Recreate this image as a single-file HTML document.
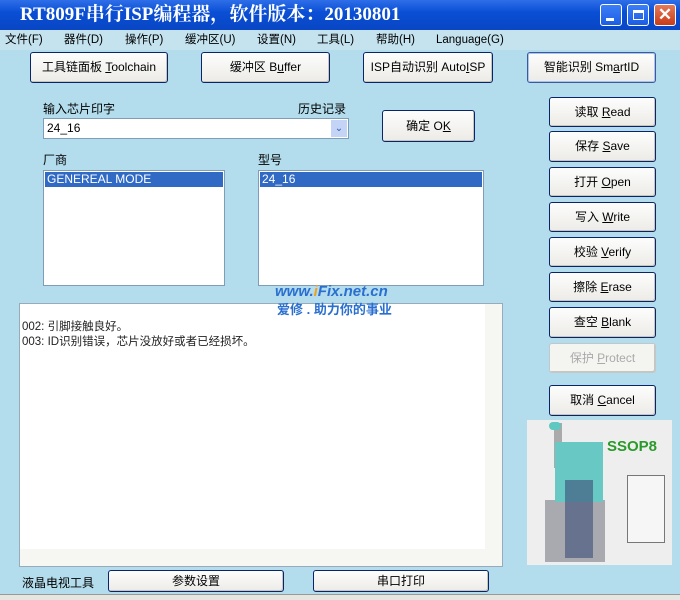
<!DOCTYPE html>
<html><head><meta charset="utf-8"><style>
*{box-sizing:border-box;margin:0;padding:0}
body{width:680px;height:600px;overflow:hidden;background:#b3dcec;font-family:"Liberation Sans","Noto Sans CJK SC",sans-serif;font-size:12px;color:#000;position:relative}
.a{position:absolute}
.title{left:0;top:0;width:680px;height:30px;background:linear-gradient(#2e6ee8,#0a4fd6 40%,#0846c4);color:#fff;font-family:"Liberation Serif","Noto Serif CJK SC",serif;font-size:19px;font-weight:bold;line-height:30px;padding-left:20px}
.menu{left:0;top:30px;width:680px;height:20px;background:#c4e3ef;font-size:11.5px;line-height:20px}
.menu span{position:absolute;top:0}
.btn{position:absolute;background:linear-gradient(#fdfdfd,#ecebe6);border:1px solid #0a246a;border-radius:3px;text-align:center;font-size:12px;box-shadow:inset -1px -1px 0 #c8c6bc}
.box{position:absolute;background:#fff;border:1px solid #7f9db9}
.sel{background:#316ac5;color:#fff;height:15px;line-height:15px;padding-left:2px;margin:1px}
.wb{position:absolute;top:4px;width:22px;height:22px;border:1px solid #fff;border-radius:3px;background:linear-gradient(#3c7ef6,#1c5ee4)}
</style></head><body>
<div class="a title">RT809F串行ISP编程器，软件版本：20130801</div>
<div class="wb" style="left:600px"><div style="position:absolute;left:5px;bottom:4px;width:8px;height:3px;background:#fff"></div></div>
<div class="wb" style="left:627px"><div style="position:absolute;left:5px;top:5px;width:11px;height:10px;border:1px solid #fff;border-top-width:3px"></div></div>
<div class="wb" style="left:654px;background:linear-gradient(#e47a5a,#c83c18);color:#fff;font-size:17px;line-height:20px;text-align:center;font-weight:bold">✕</div>
<div class="a menu"><span style="left:5px">文件(F)</span><span style="left:64px">器件(D)</span><span style="left:125px">操作(P)</span><span style="left:185px">缓冲区(U)</span><span style="left:257px">设置(N)</span><span style="left:317px">工具(L)</span><span style="left:376px">帮助(H)</span><span style="left:436px">Language(G)</span></div>

<div class="btn" style="left:30px;top:52px;width:138px;height:31px;line-height:29px">工具链面板 <u>T</u>oolchain</div>
<div class="btn" style="left:201px;top:52px;width:129px;height:31px;line-height:29px">缓冲区 B<u>u</u>ffer</div>
<div class="btn" style="left:363px;top:52px;width:130px;height:31px;line-height:29px">ISP自动识别 Auto<u>I</u>SP</div>
<div class="btn" style="left:527px;top:52px;width:129px;height:31px;line-height:29px;border-color:#3c5a9a;box-shadow:inset 0 0 0 1px #a8c4ee">智能识别 Sm<u>a</u>rtID</div>

<div class="a" style="left:43px;top:100px">输入芯片印字</div>
<div class="a" style="left:298px;top:100px">历史记录</div>
<div class="box" style="left:43px;top:118px;width:306px;height:21px;line-height:19px;padding-left:3px">24_16<div style="position:absolute;right:1px;top:1px;width:16px;height:17px;background:#c4d4f6;color:#3b5aa8;font-size:10px;text-align:center;line-height:17px">⌄</div></div>
<div class="btn" style="left:382px;top:110px;width:93px;height:32px;line-height:30px">确定 O<u>K</u></div>
<div class="a" style="left:43px;top:151px">厂商</div>
<div class="a" style="left:258px;top:151px">型号</div>
<div class="box" style="left:43px;top:170px;width:182px;height:116px"><div class="sel">GENEREAL MODE</div></div>
<div class="box" style="left:258px;top:170px;width:226px;height:116px"><div class="sel">24_16</div></div>

<div class="box" style="left:19px;top:303px;width:484px;height:264px;border-color:#9ab">
<div style="position:absolute;left:2px;top:16px;font-size:11.5px;line-height:15px;color:#222">002: 引脚接触良好。<br>003: ID识别错误，芯片没放好或者已经损坏。</div>
<div style="position:absolute;right:0;top:0;width:17px;height:245px;background:#f6f6f2"></div>
<div style="position:absolute;left:0;bottom:0;width:482px;height:17px;background:#f6f6f2"></div>
</div>
<div class="a" style="left:275px;top:283px;color:#2a6fd0;font-weight:bold;font-style:italic;font-size:15px">www.<span style="color:#f0a020">i</span>Fix.net.cn</div>
<div class="a" style="left:277px;top:299px;color:#2a6fd0;font-weight:bold;font-size:13px">爱修 . 助力你的事业</div>

<div class="btn" style="left:549px;top:97px;width:107px;height:30px;line-height:28px">读取 <u>R</u>ead</div>
<div class="btn" style="left:549px;top:131px;width:107px;height:31px;line-height:29px">保存 <u>S</u>ave</div>
<div class="btn" style="left:549px;top:167px;width:107px;height:30px;line-height:28px">打开 <u>O</u>pen</div>
<div class="btn" style="left:549px;top:202px;width:107px;height:30px;line-height:28px">写入 <u>W</u>rite</div>
<div class="btn" style="left:549px;top:237px;width:107px;height:30px;line-height:28px">校验 <u>V</u>erify</div>
<div class="btn" style="left:549px;top:272px;width:107px;height:30px;line-height:28px">擦除 <u>E</u>rase</div>
<div class="btn" style="left:549px;top:307px;width:107px;height:31px;line-height:29px">查空 <u>B</u>lank</div>
<div class="btn" style="left:549px;top:343px;width:107px;height:30px;line-height:28px;color:#aaa;border-color:#c0c8cc;background:#f4f4f0">保护 <u>P</u>rotect</div>
<div class="btn" style="left:549px;top:385px;width:107px;height:31px;line-height:29px">取消 <u>C</u>ancel</div>

<div class="a" style="left:527px;top:420px;width:145px;height:145px;background:#eeeeee">
<div class="a" style="left:27px;top:3px;width:8px;height:45px;background:#aaa"></div>
<div class="a" style="left:22px;top:2px;width:12px;height:8px;background:#5fc8c0;border-radius:4px"></div>
<div class="a" style="left:18px;top:80px;width:60px;height:62px;background:#a8aab0"></div>
<div class="a" style="left:28px;top:22px;width:48px;height:60px;background:#68c8c4"></div>
<div class="a" style="left:38px;top:60px;width:28px;height:78px;background:#3c4c78;opacity:.6"></div>
<div class="a" style="left:80px;top:18px;color:#2a9a2a;font-weight:bold;font-size:15px">SSOP8</div>
<div class="a" style="left:100px;top:55px;width:38px;height:68px;border:1px solid #777;background:#f6f6f6"></div>
</div>

<div class="a" style="left:22px;top:574px">液晶电视工具</div>
<div class="btn" style="left:108px;top:570px;width:176px;height:22px;line-height:20px">参数设置</div>
<div class="btn" style="left:313px;top:570px;width:176px;height:22px;line-height:20px">串口打印</div>
<div class="a" style="left:0;top:594px;width:680px;height:6px;background:#e6e6e0;border-top:1px solid #999"></div>
</body></html>
